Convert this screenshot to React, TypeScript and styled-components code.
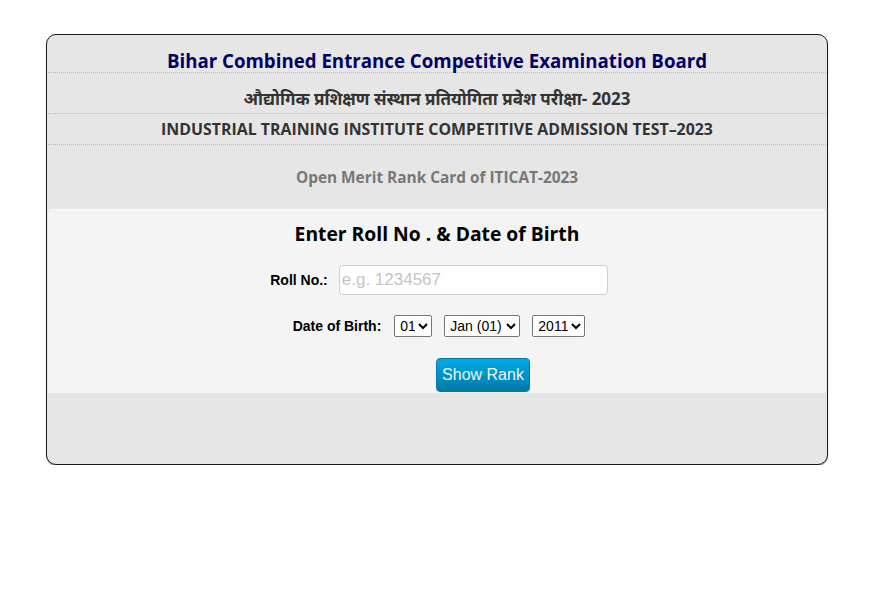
import React from "react";
import styled, { createGlobalStyle } from "styled-components";

const Global = createGlobalStyle`
  html, body { margin: 0; padding: 0; background: #fff; }
  body { font-family: "Open Sans", "Noto Sans", sans-serif; }
`;

const Page = styled.div`
  padding: 34px 0 0 46px;
`;

const Card = styled.div`
  width: 778px;
  height: 429px;
  background: #e6e6e6;
  border: 1px solid #1a1a1a;
  border-radius: 10px;
  box-shadow: 0 1px 1px rgba(0, 0, 0, 0.35);
  display: flex;
  flex-direction: column;
  padding: 0 1px;
  box-sizing: content-box;
`;

const HeadRow = styled.div<{ $h: number; $color: string; $size: number; $pt: number; $dotted?: boolean }>`
  height: ${(p) => p.$h}px;
  display: flex;
  align-items: center;
  justify-content: center;
  padding-top: ${(p) => p.$pt}px;
  color: ${(p) => p.$color};
  font-size: ${(p) => p.$size}px;
  font-weight: 700;
  border-bottom: ${(p) => (p.$dotted ? "1px dotted #bdbdbd" : "none")};
  box-sizing: border-box;
  white-space: nowrap;
`;

const FormPanel = styled.div`
  height: 184px;
  background: #f4f4f4;
  border-top: 1px solid #fbfbfb;
  border-radius: 4px 4px 0 0;
  display: flex;
  flex-direction: column;
  align-items: center;
  box-sizing: border-box;
`;

const FormTitle = styled.div`
  margin-top: 11px;
  font-size: 19.3px;
  font-weight: 700;
  color: #000;
  height: 26px;
  line-height: 26px;
`;

const FieldRow = styled.div<{ $gap: number; $mt: number }>`
  display: flex;
  align-items: center;
  gap: ${(p) => p.$gap}px;
  margin-top: ${(p) => p.$mt}px;
  margin-left: 4px;
  font-family: "Liberation Sans", Arial, sans-serif;
`;

const Label = styled.label`
  font-size: 14px;
  font-weight: 700;
  color: #000;
  font-family: "Liberation Sans", Arial, sans-serif;
`;

const TextInput = styled.input`
  width: 269px;
  height: 30px;
  box-sizing: border-box;
  border: 1px solid #cfcfcf;
  border-radius: 4px;
  background: #fff;
  padding: 0 2px;
  font-size: 17px;
  font-family: "Liberation Sans", Arial, sans-serif;
  &::placeholder { color: #c4c4c4; }
  outline: none;
`;

const Selects = styled.div`
  display: flex;
  gap: 12px;
  margin-left: 1px;
`;

const Select = styled.select<{ $w: number }>`
  width: ${(p) => p.$w}px;
  height: 22px;
  font-size: 14px;
  font-family: "Liberation Sans", Arial, sans-serif;
  border: 1px solid #767676;
  border-radius: 2px;
  background: #fff;
  color: #000;
  padding: 0 0 0 1px;
`;

const ButtonRow = styled.div`
  margin-top: 21px;
  padding-left: 92px;
`;

const Button = styled.button`
  width: 94px;
  height: 34px;
  border: 1px solid #0a78a8;
  border-radius: 4px;
  background: linear-gradient(to bottom, #02a9e2 0%, #0094c8 50%, #0078a6 100%);
  color: #eaf6fb;
  font-size: 16px;
  font-family: "Liberation Sans", Arial, sans-serif;
  padding: 0;
  cursor: pointer;
`;

export default function App() {
  return (
    <>
      <Global />
      <Page>
        <Card>
          <HeadRow $h={38} $pt={14} $color="#000066" $size={18.7} $dotted>
            Bihar Combined Entrance Competitive Examination Board
          </HeadRow>
          <HeadRow $h={41} $pt={10} $color="#333" $size={17} $dotted>
            औद्योगिक प्रशिक्षण संस्थान प्रतियोगिता प्रवेश परीक्षा- 2023
          </HeadRow>
          <HeadRow $h={31} $pt={0} $color="#333" $size={15.9} $dotted>
            INDUSTRIAL TRAINING INSTITUTE COMPETITIVE ADMISSION TEST–2023
          </HeadRow>
          <HeadRow $h={64} $pt={0} $color="#777" $size={15.4}>
            Open Merit Rank Card of ITICAT-2023
          </HeadRow>
          <FormPanel>
            <FormTitle>Enter Roll No . &amp; Date of Birth</FormTitle>
            <FieldRow $gap={11} $mt={18}>
              <Label>Roll No.:</Label>
              <TextInput placeholder="e.g. 1234567" />
            </FieldRow>
            <FieldRow $gap={12} $mt={20}>
              <Label>Date of Birth:</Label>
              <Selects>
                <Select $w={38} defaultValue="01">
                  <option>01</option>
                </Select>
                <Select $w={76} defaultValue="Jan (01)">
                  <option>Jan (01)</option>
                </Select>
                <Select $w={53} defaultValue="2011">
                  <option>2011</option>
                </Select>
              </Selects>
            </FieldRow>
            <ButtonRow>
              <Button>Show Rank</Button>
            </ButtonRow>
          </FormPanel>
        </Card>
      </Page>
    </>
  );
}
